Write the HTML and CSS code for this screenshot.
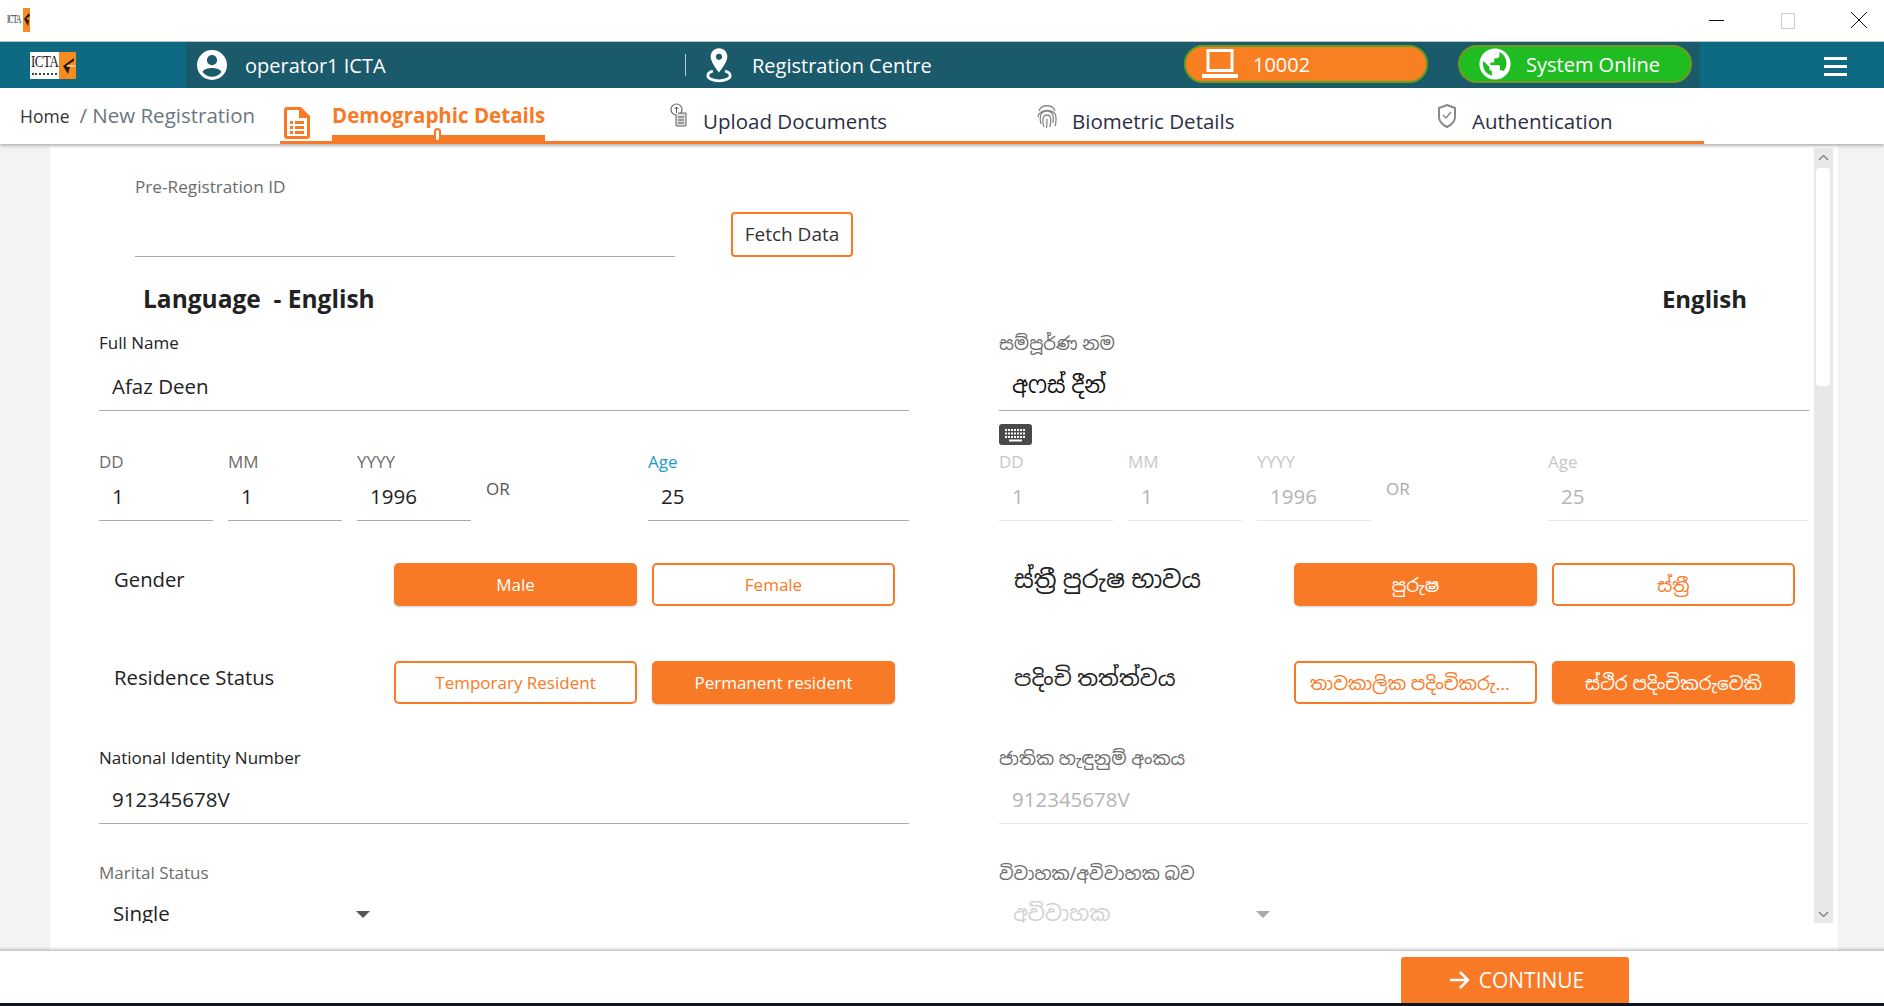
FILE: index.html
```html
<!DOCTYPE html>
<html lang="en">
<head>
    <meta charset="UTF-8">
    <title>New Registration</title>
    <link rel="stylesheet" href="styles.css">
</head>
<body>
    <div class="titlebar">
        <div class="mini-logo"><span class="mini-logo-text">ICTA</span><span class="mini-logo-mark"><svg width="7" height="24" viewBox="0 0 7 24"><path d="M6 5L1 11l4 7 1-6-3-1 4-3z" fill="#2b1a0c"/></svg></span></div>
        <div class="win-controls">
            <svg width="16" height="16" viewBox="0 0 16 16"><path d="M0 8.500h15" stroke="#111" stroke-width="1"/></svg>
            <svg width="16" height="16" viewBox="0 0 16 16"><rect x="1.500" y="1.500" width="13" height="15" fill="none" stroke="#ccc"/></svg>
            <svg width="16" height="16" viewBox="0 0 16 16"><path d="M0 0l16 16M16 0L0 16" stroke="#111" stroke-width="1"/></svg>
        </div>
    </div>

    <header class="topbar">
        <div class="logo-slot">
            <div class="logo">
                <div class="logo-left"><span class="logo-text">ICTA</span><i class="logo-tag"></i></div>
                <span class="logo-mark"><svg width="15" height="22" viewBox="0 0 15 22"><path d="M14 3L3 11l5 8 2-7-4-1 8-5z" fill="#2b1a0c"/><path d="M7 11h8" stroke="#fff" stroke-width="1"/></svg></span>
            </div>
        </div>
        <div class="topbar-inner">
            <svg class="user-icon" width="36" height="36" viewBox="0 0 24 24"><path fill="#fff" d="M12 2a10 10 0 1 0 0 20 10 10 0 0 0 0-20zm0 3.400a3.400 3.400 0 1 1 0 6.800 3.400 3.400 0 0 1 0-6.800zm0 14.400a7.900 7.900 0 0 1-6.300-3.200c.6-1.600 3.600-2.600 6.300-2.600s5.700 1 6.300 2.600a7.900 7.900 0 0 1-6.300 3.200z"/></svg>
            <span class="top-name">operator1 ICTA</span>
            <span class="top-sep"></span>
            <svg class="pin-icon" width="26" height="36" viewBox="0 0 28 38"><path fill="#fff" d="M14 1C8.500 1 5 5.200 5 10c0 6 9 17 9 17s9-11 9-17c0-4.800-3.500-9-9-9zm0 12.500a3.300 3.300 0 1 1 0-6.600 3.300 3.300 0 0 1 0 6.600z"/><path fill="none" stroke="#fff" stroke-width="3" d="M7.500 25.500C4 26.500 2 28.500 2 30.500c0 3 5.500 5.500 12 5.500s12-2.500 12-5.500c0-2-2-4-5.500-5"/></svg>
            <span class="top-centre">Registration Centre</span>
            <div class="pill pill-orange">
                <svg width="36" height="34" viewBox="0 0 36 34"><path fill="none" stroke="#fff" stroke-width="3" d="M6 3.500h24v20H6z"/><path fill="#fff" d="M0 27h36v4H0z"/></svg>
                <span>10002</span>
            </div>
            <div class="pill pill-green">
                <svg width="34" height="34" viewBox="0 0 24 24"><path fill="#fff" d="M12 1a11 11 0 1 0 0 22 11 11 0 0 0 0-22zM3.500 12c0-.8.100-1.500.300-2.200L8 14v1.200c0 1 .8 1.800 1.800 1.800v3.300A8.500 8.500 0 0 1 3.500 12zm14.800 5.700c-.2-.8-1-1.300-1.800-1.300h-1v-2.700c0-.5-.4-.9-.9-.9H8.800v-1.900h1.800c.5 0 .9-.4.900-.9V8h1.800c1 0 1.800-.8 1.800-1.800v-2.600a8.500 8.500 0 0 1 2.200 14.100z"/></svg>
                <span>System Online</span>
            </div>
        </div>
        <div class="burger"><i></i><i></i><i></i></div>
    </header>

    <nav class="navbar">
        <div class="crumbs"><span class="crumb-home">Home</span><span class="crumb-rest">/ New Registration</span></div>
        <div class="tabs">
            <div class="tab tab-first">
                <svg width="26" height="32" viewBox="0 0 26 32"><path fill="#f87a26" d="M3 0h14l9 9v20a3 3 0 0 1-3 3H3a3 3 0 0 1-3-3V3a3 3 0 0 1 3-3zm12 3H3v26h20V11h-8zM6 14h3v3H6zm5 0h9v3h-9zm-5 5h3v3H6zm5 0h9v3h-9zm-5 5h3v3H6zm5 0h9v3h-9z"/></svg>
                <span class="tab-active">Demographic Details<i class="tab-knob"></i></span>
            </div>
            <div class="tab tab-upload">
                <svg width="18" height="24" viewBox="0 0 18 24"><circle cx="6.500" cy="6.500" r="5.500" fill="#fff" stroke="#666" stroke-width="1.200"/><path d="M6.500 10V4M4.500 6l2-2 2 2" fill="none" stroke="#555"/><path d="M8 10h8v13H6V12" fill="#ddd" stroke="#666"/><path d="M8 14h6M8 17h6M8 20h6" stroke="#555"/></svg>
                <span>Upload Documents</span>
            </div>
            <div class="tab tab-bio">
                <svg width="20" height="26" viewBox="0 0 20 26" fill="none" stroke="#888" stroke-width="1.300"><path d="M2 8c2-7 14-7 16 0M1 14c0-8 18-10 18 1 0 3 0 6-1 8M4 21c-2-8 0-13 6-13s7 5 6 12M7 24c-2-5-2-12 3-12s4 6 3 12M10 16c0 4 0 6-.5 9"/></svg>
                <span>Biometric Details</span>
            </div>
            <div class="tab tab-auth">
                <svg width="20" height="26" viewBox="0 0 20 26" fill="none" stroke="#888" stroke-width="2"><path d="M10 2l8 3v9c0 5-4 8-8 10-4-2-8-5-8-10V5z"/><path d="M6 12l3 3 5-6" stroke-width="1.500"/></svg>
                <span>Authentication</span>
            </div>
        </div>
    </nav>

    <main class="main">
        <section class="card">
            <div class="form">
                <div class="prereg">
                    <div class="prereg-field">
                        <div class="prereg-label">Pre-Registration ID</div>
                    </div>
                    <button class="fetch-btn">Fetch Data</button>
                </div>
                <div class="lang-row">
                    <span class="lang-left">Language&nbsp; - English</span>
                    <span class="lang-right">English</span>
                </div>
                <div class="columns">
                    <div class="col">
                        <div class="label label-dark">Full Name</div>
                        <div class="value value-tall">Afaz Deen</div>
                        <div class="kbd-row"></div>
                        <div class="dates">
                            <div class="date-cell"><div class="label">DD</div><div class="value">1</div></div>
                            <div class="date-cell"><div class="label">MM</div><div class="value">1</div></div>
                            <div class="date-cell"><div class="label">YYYY</div><div class="value">1996</div></div>
                            <div class="or">OR</div>
                            <div class="date-cell age"><div class="label label-blue">Age</div><div class="value">25</div></div>
                        </div>
                        <div class="choice choice-first">
                            <div class="choice-label">Gender</div>
                            <button class="opt opt-on">Male</button>
                            <button class="opt">Female</button>
                        </div>
                        <div class="choice">
                            <div class="choice-label">Residence Status</div>
                            <button class="opt">Temporary Resident</button>
                            <button class="opt opt-on">Permanent resident</button>
                        </div>
                        <div class="label label-dark label-nin">National Identity Number</div>
                        <div class="value value-tall">912345678V</div>
                        <div class="label label-marital">Marital Status</div>
                        <div class="select">
                            <span>Single</span>
                            <i class="caret"></i>
                        </div>
                    </div>
                    <div class="col col-local">
                        <div class="label si-label">සම්පූර්ණ නම</div>
                        <div class="value value-tall value-edit">අෆස් දීන්</div>
                        <div class="kbd-row">
                            <svg width="33" height="21" viewBox="0 0 33 21"><rect width="33" height="21" rx="3" fill="#4a4a4a"/><path d="M6 6h21M6 9.500h21M6 13h21" stroke="#fff" stroke-width="2" stroke-dasharray="2 1"/><path d="M10 15.500h13v2H10z" fill="#fff"/></svg>
                        </div>
                        <div class="dates">
                            <div class="date-cell"><div class="label">DD</div><div class="value">1</div></div>
                            <div class="date-cell"><div class="label">MM</div><div class="value">1</div></div>
                            <div class="date-cell"><div class="label">YYYY</div><div class="value">1996</div></div>
                            <div class="or">OR</div>
                            <div class="date-cell age"><div class="label">Age</div><div class="value">25</div></div>
                        </div>
                        <div class="choice choice-first">
                            <div class="choice-label">ස්ත්‍රී පුරුෂ භාවය</div>
                            <button class="opt opt-on">පුරුෂ</button>
                            <button class="opt">ස්ත්‍රී</button>
                        </div>
                        <div class="choice">
                            <div class="choice-label">පදිංචි තත්ත්වය</div>
                            <button class="opt">තාවකාලික පදිංචිකරුවෙකි</button>
                            <button class="opt opt-on">ස්ථිර පදිංචිකරුවෙකි</button>
                        </div>
                        <div class="label si-label label-nin">ජාතික හැඳුනුම් අංකය</div>
                        <div class="value value-tall">912345678V</div>
                        <div class="label si-label label-marital">විවාහක/අවිවාහක බව</div>
                        <div class="select">
                            <span>අවිවාහක</span>
                            <i class="caret"></i>
                        </div>
                    </div>
                </div>
            </div>
            <div class="scrollbar">
                <svg width="19" height="20" viewBox="0 0 19 20"><path d="M5 12l4.500-4.500L14 12" fill="none" stroke="#777" stroke-width="1.200"/></svg>
                <div class="thumb"></div>
                <svg class="scroll-down" width="19" height="18" viewBox="0 0 19 18"><path d="M5 7l4.500 4.500L14 7" fill="none" stroke="#777" stroke-width="1.200"/></svg>
            </div>
        </section>
    </main>

    <footer class="footer">
        <button class="continue">
            <svg width="20" height="20" viewBox="0 0 20 20"><path d="M0 10h18M10 2l8 8-8 8" fill="none" stroke="#fff" stroke-width="2.500"/></svg>
            <span>CONTINUE</span>
        </button>
    </footer>
    <div class="desktop-strip"></div>
</body>
</html>
```

FILE: styles.css
```css
*{
    box-sizing: border-box;
}
html, body{
    margin: 0;
    height: 100%;
}
body{
    display: flex;
    flex-direction: column;
    height: 1006px;
    overflow: hidden;
    background-color: #fff;
    color: #222;
    font-family: "Open Sans", "Noto Sans", "Noto Sans Sinhala", "Liberation Sans", sans-serif;
}
button{
    font-family: inherit;
    cursor: pointer;
}

/* window title */
.titlebar{
    display: flex;
    justify-content: space-between;
    flex: 0 0 42px;
    padding: 8px 0 0 7px;
    border-bottom: 1px solid #bcc5c8;
}
.mini-logo{
    display: flex;
    width: 23px;
    height: 24px;
}
.mini-logo-text{
    width: 16px;
    font: 7px/12px "Liberation Serif", serif;
    letter-spacing: -0.5px;
    color: #222;
    transform: scaleY(1.9);
    transform-origin: 0 0;
}
.mini-logo-mark{
    width: 7px;
    line-height: 0;
    background-color: #f68c1f;
}
.win-controls{
    display: flex;
    gap: 55px;
    padding: 4px 17px 0 0;
}
.win-controls svg{
    overflow: visible;
}

/* teal bar */
.topbar{
    display: flex;
    flex: 0 0 46px;
    background-color: #0d6a82;
}
.logo-slot{
    display: flex;
    flex: 0 0 186px;
    padding: 10px 0 0 30px;
}
.logo{
    display: flex;
    width: 46px;
    height: 27px;
    background-color: #fff;
}
.logo-left{
    width: 29px;
    padding-left: 1px;
}
.logo-text{
    display: block;
    height: 19px;
    font: 13px/14px "Liberation Serif", serif;
    letter-spacing: -0.5px;
    color: #222;
    transform: scaleY(1.35);
    transform-origin: 0 0;
}
.logo-tag{
    display: block;
    width: 25px;
    margin: 2px 0 0 1px;
    border-top: 2px dotted #444;
}
.logo-mark{
    display: flex;
    align-items: center;
    justify-content: center;
    width: 17px;
    background-color: #f68c1f;
}
.topbar-inner{
    display: flex;
    align-items: center;
    flex: 0 0 1514px;
    background-color: #1b5a6b;
    color: #fff;
    font-size: 20px;
}
.user-icon{
    margin-left: 8px;
}
.top-name{
    width: 440px;
    margin-left: 15px;
}
.top-sep{
    width: 1px;
    height: 22px;
    background-color: #b9c9ce;
}
.pin-icon{
    margin-left: 20px;
}
.top-centre{
    width: 432px;
    margin-left: 20px;
}
.pill{
    display: flex;
    align-items: center;
    height: 38px;
    margin-top: -2px;
    border: 2px solid #6f9c1e;
    border-radius: 19px;
}
.pill-orange{
    width: 244px;
    padding-left: 16px;
    background-color: #f87f22;
}
.pill-orange span{
    margin-left: 15px;
}
.pill-green{
    width: 234px;
    margin-left: 30px;
    padding-left: 18px;
    background-color: #20bd22;
}
.pill-green span{
    margin-left: 14px;
}
.burger{
    display: flex;
    flex-direction: column;
    gap: 5px;
    margin: 15px 0 0 124px;
}
.burger i{
    display: block;
    width: 23px;
    height: 3px;
    background-color: #fff;
}

/* breadcrumb and steps */
.navbar{
    position: relative;
    z-index: 1;
    display: flex;
    flex: 0 0 56px;
    box-shadow: 0 2px 3px rgba(0, 0, 0, 0.25);
}
.crumbs{
    flex: 0 0 280px;
    padding: 13px 0 0 20px;
    white-space: nowrap;
}
.crumb-home{
    font-size: 17.5px;
    color: #333;
}
.crumb-rest{
    margin-left: 10px;
    font-size: 20.500px;
    color: #6b7680;
}
.tabs{
    position: relative;
    display: flex;
    flex: 0 0 1424px;
    height: 56px;
    border-bottom: 3px solid #f87a26;
    font-size: 20.500px;
    color: #2b2f45;
}
.tab{
    display: flex;
    flex: 0 0 auto;
    white-space: nowrap;
}
.tab svg{
    margin-top: 17px;
}
.tab span{
    margin-top: 19px;
}
.tab-first{
    width: 390px;
    padding-left: 4px;
}
.tab-first svg{
    margin-top: 19px;
}
.tab .tab-active{
    position: relative;
    height: 53px;
    margin: 0 0 0 22px;
    padding-top: 15px;
    border-bottom: 6px solid #f87a26;
    font-weight: 700;
    font-size: 20.500px;
    color: #f87a26;
    line-height: 24px;
}
.tab-knob{
    position: absolute;
    left: 102px;
    bottom: -7px;
    width: 7px;
    height: 14px;
    border: 2px solid #f87a26;
    border-radius: 4px;
    background-color: #fff;
}
.tab-upload{
    width: 367px;
}
.tab-upload svg{
    margin-top: 15px;
}
.tab-upload span{
    margin-left: 15px;
}
.tab-bio{
    width: 400px;
}
.tab-bio svg{
    margin-top: 15px;
}
.tab-bio span{
    margin-left: 15px;
}
.tab-auth svg{
    margin-top: 15px;
}
.tab-auth span{
    margin-left: 15px;
}

/* scrolling form */
.main{
    flex: 1 1 auto;
    min-height: 0;
    padding: 2px 46px 0 50px;
    background-color: #f3f3f3;
    box-shadow: inset 0 -3px 3px -2px rgba(0, 0, 0, 0.2);
}
.card{
    display: flex;
    height: 100%;
    background-color: #fff;
    box-shadow: inset 0 -3px 3px -2px rgba(0, 0, 0, 0.2);
}
.form{
    flex: 0 0 1764px;
    height: 777px;
    padding-left: 49px;
    overflow: hidden;
}
.prereg{
    display: flex;
    align-items: flex-end;
    height: 134px;
    padding: 0 0 23px 36px;
}
.prereg-field{
    width: 540px;
    height: 83px;
    border-bottom: 1px solid #aaa;
}
.prereg-label{
    font-size: 17.200px;
    line-height: 26px;
    color: #6c6c6c;
}
.fetch-btn{
    width: 122px;
    height: 45px;
    margin-left: 56px;
    padding: 0 0 2px;
    border: 2px solid #f87a26;
    border-radius: 4px;
    background-color: #fff;
    font-size: 19px;
    color: #333;
}
.lang-row{
    display: flex;
    justify-content: space-between;
    width: 1648px;
    height: 40px;
    padding-left: 44px;
    font-size: 24.500px;
    font-weight: 700;
    line-height: 38px;
    color: #222;
}
.lang-right{
    font-size: 24px;
}
.columns{
    display: grid;
    grid-template-columns: 810px 810px;
    gap: 90px;
    margin-top: 10px;
}
.label{
    font-size: 17px;
    line-height: 26px;
    color: #6c6c6c;
    white-space: nowrap;
}
.si-label{
    font-size: 18px;
}
.label-dark{
    color: #222;
}
.label-blue{
    color: #1a9cc4;
}
.label-nin{
    margin-top: 41px;
}
.label-nin + .value{
    height: 53px;
    padding-top: 13px;
}
.label-marital{
    margin-top: 36px;
}
.value{
    height: 46px;
    padding: 6px 0 0 13px;
    border-bottom: 1px solid #aaa;
    font-size: 20.500px;
    line-height: 30px;
    color: #222;
}
.value-tall{
    height: 55px;
    padding-top: 15px;
}
.kbd-row{
    height: 21px;
    margin: 13px 0 4px;
    line-height: 0;
}
.dates{
    display: flex;
    gap: 15px;
}
.date-cell{
    flex: 0 0 114px;
}
.date-cell.age{
    flex: 1 1 auto;
}
.or{
    flex: 0 0 147px;
    padding-top: 27px;
    font-size: 17px;
    line-height: 26px;
    color: #555;
}
.choice{
    display: grid;
    grid-template-columns: 265px 243px 243px;
    column-gap: 15px;
    height: 43px;
    margin-top: 55px;
    padding-left: 15px;
}
.choice-first{
    margin-top: 42px;
}
.choice-label{
    margin-right: -15px;
    font-size: 20.300px;
    line-height: 32px;
    color: #222;
}
.col-local .choice-label{
    font-size: 24px;
    white-space: nowrap;
}
.col-local .choice + .choice .choice-label{
    font-size: 22px;
}
.opt{
    height: 43px;
    padding: 0 14px;
    border: 2px solid #f87a26;
    border-radius: 5px;
    background-color: #fff;
    font-size: 17px;
    color: #f87a26;
    white-space: nowrap;
    overflow: hidden;
    text-overflow: ellipsis;
}
.col-local .opt{
    font-size: 18.300px;
}
.opt-on{
    background-color: #f87a26;
    color: #fff;
    box-shadow: 0 1px 2px rgba(0, 0, 0, 0.2);
}
.select{
    display: flex;
    align-items: center;
    justify-content: space-between;
    width: 271px;
    height: 38px;
    padding: 15px 0 0 14px;
    overflow: hidden;
    font-size: 20.500px;
    line-height: 44px;
}
.caret{
    width: 0;
    height: 0;
    margin-top: 3px;
    border: 7px solid transparent;
    border-top-color: #555;
    border-bottom-width: 0;
}

/* disabled local language column */
.col-local .value{
    border-bottom-color: #e8e8e8;
    color: #b5b5b5;
}
.col-local .value-edit{
    padding-top: 14px;
    border-bottom-color: #aaa;
    font-size: 22.500px;
    color: #111;
}
.col-local .dates .label{
    color: #c8c8c8;
}
.col-local .or{
    color: #aaa;
}
.col-local .select{
    font-size: 21px;
    color: #d2d2d2;
}
.col-local .caret{
    border-top-color: #aaa;
}

/* scrollbar */
.scrollbar{
    display: flex;
    flex-direction: column;
    flex: 0 0 19px;
    height: 775px;
    margin-top: 2px;
    background-color: #e8e8e8;
}
.thumb{
    width: 14px;
    height: 218px;
    margin-left: 2px;
    border-radius: 4px;
    background-color: #fff;
}
.scroll-down{
    margin-top: auto;
}

/* footer */
.footer{
    position: relative;
    display: flex;
    justify-content: flex-start;
    flex: 0 0 52px;
    padding: 6px 0 0 1401px;
    border-top: 1px solid #ccc;
    background-color: #fff;
}
.continue{
    display: flex;
    align-items: center;
    justify-content: center;
    gap: 9px;
    width: 228px;
    height: 46px;
    padding: 0 0 0 4px;
    border: 0;
    border-radius: 3px 3px 0 0;
    background-color: #f87a26;
    font-size: 21px;
    color: #fff;
}
.desktop-strip{
    flex: 0 0 3px;
    background-color: #10121c;
}
```
